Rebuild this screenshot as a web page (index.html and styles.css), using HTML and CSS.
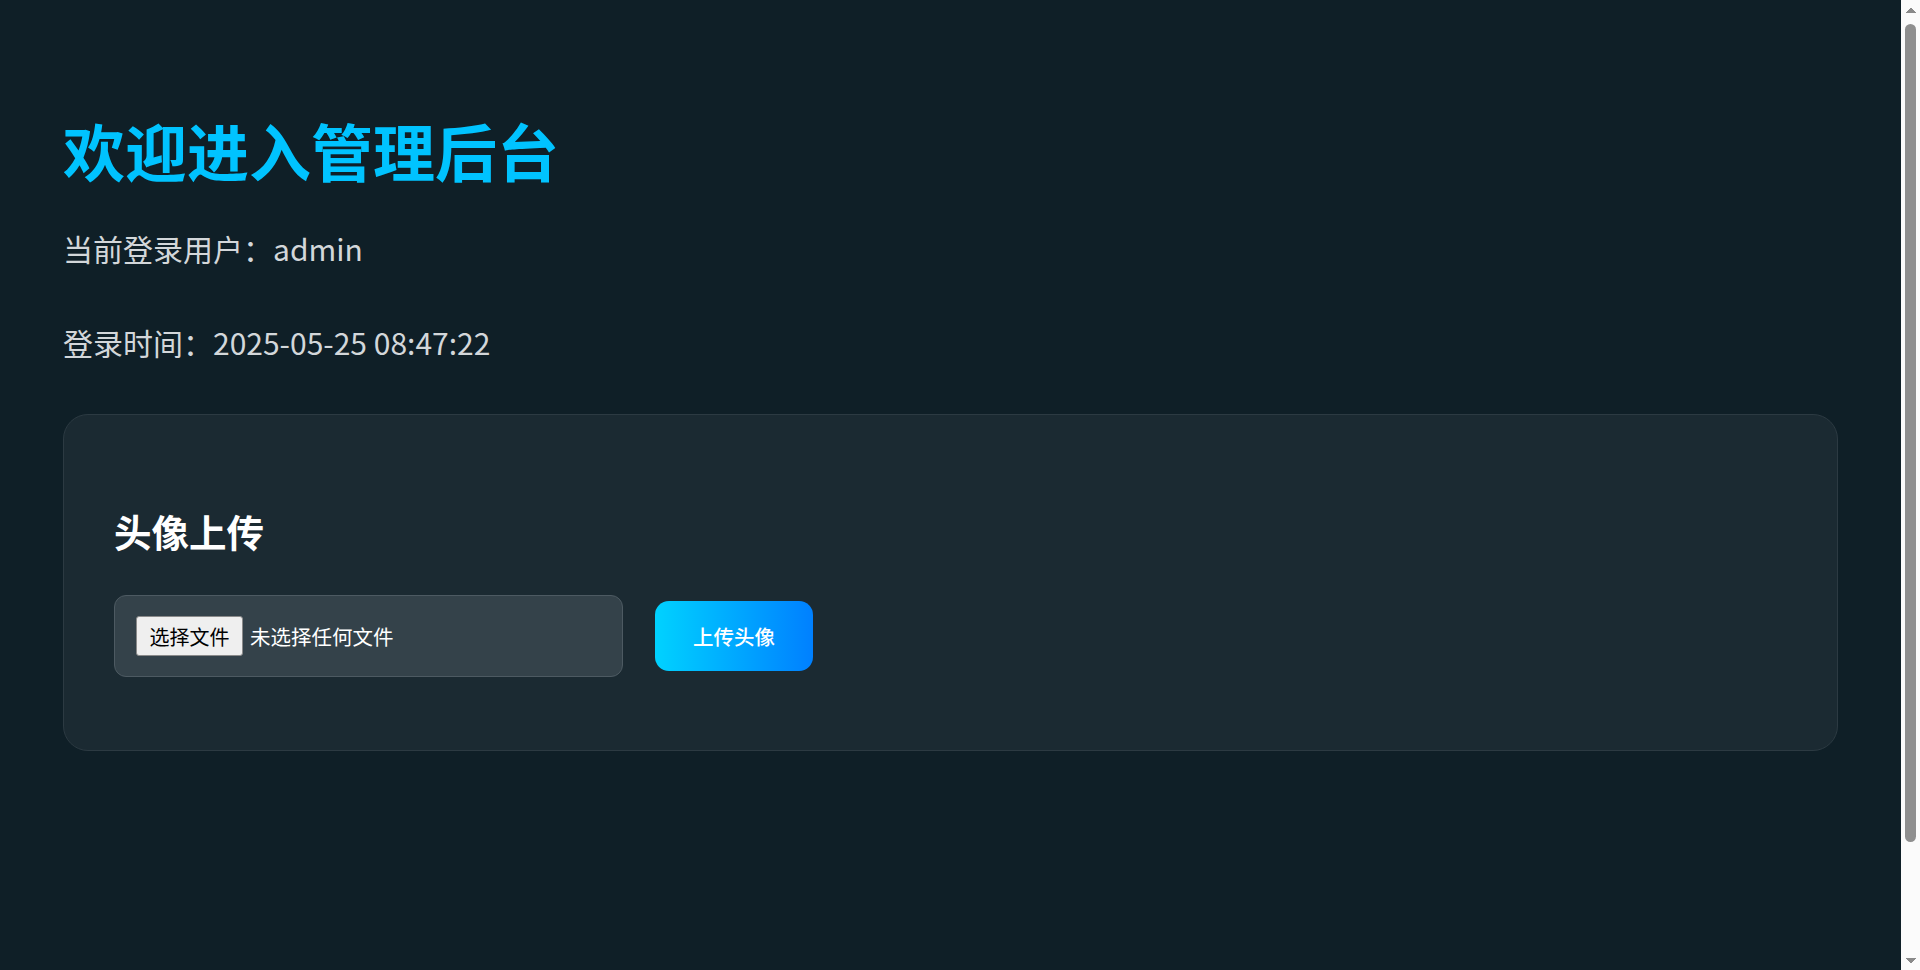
FILE: index.html
```html
<!DOCTYPE html>
<html lang="zh-CN">
<head>
<meta charset="utf-8">
<title>管理后台</title>
<link rel="stylesheet" href="styles.css">
</head>
<body>
<div class="viewport">
  <main class="page">
    <h1 class="title">欢迎进入管理后台</h1>
    <p class="info">当前登录用户：admin</p>
    <p class="info">登录时间：2025-05-25 08:47:22</p>
    <section class="card">
      <h2 class="card-title">头像上传</h2>
      <form class="upload-row" onsubmit="return false">
        <label class="file-box">
          <span class="file-btn">选择文件</span>
          <span class="file-name">未选择任何文件</span>
        </label>
        <button type="submit" class="upload-btn">上传头像</button>
      </form>
    </section>
  </main>
</div>
<div class="scrollbar" aria-hidden="true">
  <div class="sb-arrow sb-up"></div>
  <div class="sb-track"><div class="sb-thumb"></div></div>
  <div class="sb-arrow sb-down"></div>
</div>
</body>
</html>
```
FILE: styles.css
```css
html, body {
  height: 100%;
}
html {
  background: #0f1f27;
}
body {
  margin: 0;
  display: flex;
  overflow: hidden;
  background: #0f1f27;
  color: #d3d7da;
  font-family: "Noto Sans CJK SC", "Noto Sans", sans-serif;
}
.viewport {
  flex: 1;
  min-width: 0;
  height: 100%;
  overflow: hidden;
}
.page {
  min-height: 100vh;
  padding: 64px 63px;
}
.title {
  margin: 49px 0 39px;
  font-size: 62px;
  line-height: 74px;
  font-weight: 700;
  color: #00c3ff;
}
.info {
  margin: 0 0 49px;
  font-size: 30px;
  line-height: 45px;
  color: #d3d7da;
}
.card {
  background: #1b2a32;
  border: 1px solid #2c3a42;
  border-radius: 25px;
  padding: 93px 50px 73px;
}
.card-title {
  margin: 0 0 42px;
  font-size: 37.5px;
  line-height: 45px;
  font-weight: 700;
  color: #ffffff;
}
.upload-row {
  display: flex;
  align-items: center;
  gap: 32px;
  margin: 0;
}
.file-box {
  box-sizing: border-box;
  width: 509px;
  height: 82px;
  display: flex;
  align-items: center;
  padding: 0 20px 0 21px;
  background: #34424a;
  border: 1px solid #4d5a62;
  border-radius: 12px;
}
.file-btn {
  box-sizing: border-box;
  width: 107px;
  height: 40px;
  display: flex;
  align-items: center;
  justify-content: center;
  background: #efefef;
  border: 1px solid #8a8a8a;
  border-radius: 3px;
  color: #000;
  font-size: 20px;
}
.file-name {
  margin-left: 7px;
  color: #ffffff;
  font-size: 20.5px;
}
.upload-btn {
  box-sizing: border-box;
  width: 158px;
  height: 70px;
  border: none;
  border-radius: 14px;
  background: linear-gradient(90deg, #00d2ff, #0080ff);
  color: #ffffff;
  font-family: "Noto Sans CJK SC", sans-serif;
  font-size: 20.5px;
  font-weight: 500;
  cursor: pointer;
}

/* browser scrollbar as seen in the reference */
.scrollbar {
  flex: 0 0 19px;
  width: 19px;
  height: 100%;
  display: flex;
  flex-direction: column;
  background: #fbfbfb;
}
.sb-arrow {
  flex: 0 0 19px;
  background-repeat: no-repeat;
  background-position: center;
  background-size: 10px 6px;
}
.sb-up {
  background-image: conic-gradient(from 140deg at 50% 0, #8a8a8a 80deg, transparent 0);
}
.sb-down {
  background-image: conic-gradient(from -40deg at 50% 100%, #8a8a8a 80deg, transparent 0);
}
.sb-track {
  flex: 1;
  display: flex;
  flex-direction: column;
  align-items: center;
}
.sb-thumb {
  width: 11px;
  height: 818px;
  margin-top: 5px;
  border-radius: 6px;
  background: #8f8f8f;
}
```
